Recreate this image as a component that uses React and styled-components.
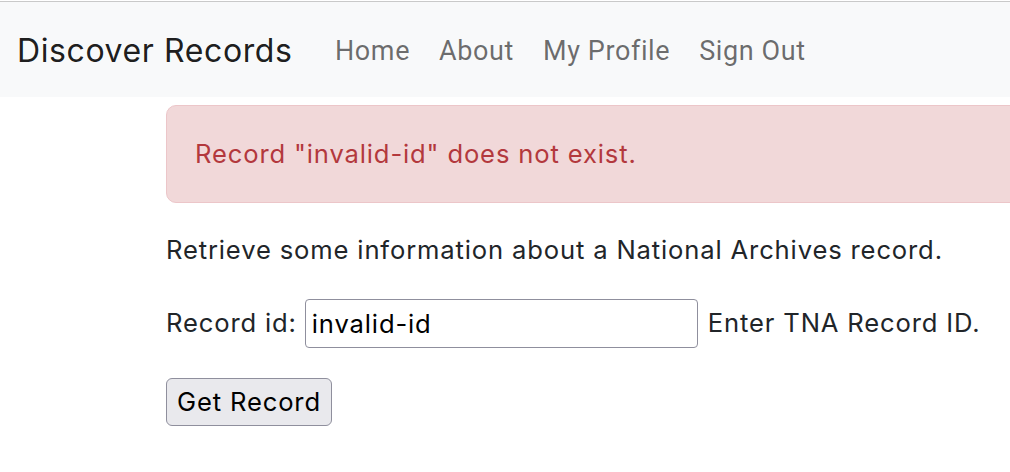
import styled, { createGlobalStyle } from 'styled-components';

const GlobalStyle = createGlobalStyle`
  html, body {
    margin: 0;
    padding: 0;
    background: #fff;
    overflow: hidden;
  }

  body {
    padding-top: 1px;
    font-family: Inter, "Noto Sans", "Liberation Sans", sans-serif;
    font-size: 25.6px;
    line-height: 1.5;
    letter-spacing: 0.85px;
    color: #212529;
  }
`

function App() {
  return (
    <>
      <GlobalStyle />
      <NavBarStyled>
        <Brand href="#">Discover Records</Brand>
        <NavList>
          <NavItem><NavLink href="#">Home</NavLink></NavItem>
          <NavItem><NavLink href="#">About</NavLink></NavItem>
          <NavItem><NavLink href="#">My Profile</NavLink></NavItem>
          <NavItem><NavLink href="#">Sign Out</NavLink></NavItem>
        </NavList>
      </NavBarStyled>

      <Main>
        <Alert role="alert">Record "invalid-id" does not exist.</Alert>

        <Intro>Retrieve some information about a National Archives record.</Intro>

        <RecordForm onSubmit={(e) => e.preventDefault()}>
          <FieldRow>
            <label htmlFor="record-id">Record id:</label>
            <TextInput id="record-id" type="text" defaultValue="invalid-id" />
            <Hint>Enter TNA Record ID.</Hint>
          </FieldRow>
          <SubmitButton type="submit">Get Record</SubmitButton>
        </RecordForm>
      </Main>
    </>
  );
}

const NavBarStyled = styled.nav`
  box-sizing: border-box;
  display: flex;
  align-items: center;
  height: 96px;
  padding: 3px 17px 0;
  border-top: 1px solid #c9c9c9;
  background-color: #f8f9fa;
`

const Brand = styled.a`
  margin-right: 28px;
  font-size: 32px;
  letter-spacing: 0.6px;
  color: rgba(0, 0, 0, 0.9);
  text-decoration: none;
  white-space: nowrap;
`

const NavList = styled.ul`
  display: flex;
  margin: 0;
  padding: 0;
  list-style: none;
`

const NavItem = styled.li`
  padding: 0 14.5px;
`

const NavLink = styled.a`
  font-family: Roboto, "Liberation Sans", sans-serif;
  font-size: 27px;
  letter-spacing: 0.6px;
  color: rgba(0, 0, 0, 0.58);
  text-decoration: none;
  white-space: nowrap;
`

const Main = styled.main`
  width: 1110px;
  margin-top: 8px;
  padding-left: 166px;
`

const Alert = styled.div`
  margin-bottom: 28px;
  padding: 29px 28px;
  border: 1px solid #ecc6c9;
  border-radius: 10px;
  background-color: #f1d8d9;
  color: #b3383d;
`

const Intro = styled.p`
  margin: 0 0 23px;
`

const RecordForm = styled.form`
  display: flex;
  flex-direction: column;
  align-items: flex-start;
  gap: 24px;
`

const FieldRow = styled.div`
  display: flex;
  align-items: center;
  height: 61px;

  label {
    margin-right: 8px;
  }
`

const TextInput = styled.input`
  box-sizing: border-box;
  width: 393px;
  height: 49px;
  margin-right: 10px;
  padding: 0 6px;
  border: 1px solid #8f8f9d;
  border-radius: 4px;
  font-family: inherit;
  font-size: 25.6px;
  letter-spacing: inherit;
  color: #000;
  outline: none;
`

const Hint = styled.span`
  white-space: nowrap;
`

const SubmitButton = styled.button`
  box-sizing: border-box;
  height: 48px;
  padding: 0 10px;
  border: 1px solid #8f8f9d;
  border-radius: 6px;
  background-color: #e9e9ed;
  font-family: inherit;
  font-size: 25.6px;
  letter-spacing: inherit;
  color: #000;
  cursor: pointer;
`

export default App;
